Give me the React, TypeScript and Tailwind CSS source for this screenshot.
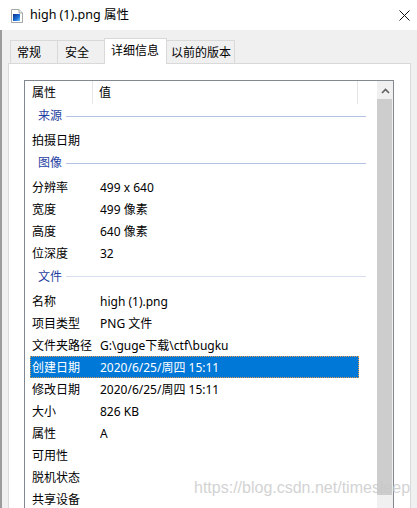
import React from "react";

type Item =
  | { kind: "group"; label: string; h: string; line: string }
  | { kind: "row"; label: string; value?: string; selected?: boolean };

const items: Item[] = [
  { kind: "group", label: "来源", h: "h-[25px]", line: "bg-[#b3c1e6]" },
  { kind: "row", label: "拍摄日期" },
  { kind: "group", label: "图像", h: "h-[25px]", line: "bg-[#b3c1e6]" },
  { kind: "row", label: "分辨率", value: "499 x 640" },
  { kind: "row", label: "宽度", value: "499 像素" },
  { kind: "row", label: "高度", value: "640 像素" },
  { kind: "row", label: "位深度", value: "32" },
  { kind: "group", label: "文件", h: "h-[26px]", line: "bg-[#d6dff1]" },
  { kind: "row", label: "名称", value: "high (1).png" },
  { kind: "row", label: "项目类型", value: "PNG 文件" },
  { kind: "row", label: "文件夹路径", value: "G:\\guge下载\\ctf\\bugku" },
  { kind: "row", label: "创建日期", value: "2020/6/25/周四 15:11", selected: true },
  { kind: "row", label: "修改日期", value: "2020/6/25/周四 15:11" },
  { kind: "row", label: "大小", value: "826 KB" },
  { kind: "row", label: "属性", value: "A" },
  { kind: "row", label: "可用性" },
  { kind: "row", label: "脱机状态" },
  { kind: "row", label: "共享设备" },
];

function FileIcon() {
  return (
    <svg width="12" height="14" viewBox="0 0 12 14">
      <path d="M0.5 0.5 H8 L11.5 4 V13.5 H0.5 Z" fill="#ffffff" stroke="#a8a8a8" />
      <path d="M8 0.5 V4 H11.5" fill="#e8e8e8" stroke="#a8a8a8" />
      <defs>
        <linearGradient id="g1" x1="0" y1="0" x2="1" y2="1">
          <stop offset="0" stopColor="#0b2f8a" />
          <stop offset="0.6" stopColor="#1e6fd6" />
          <stop offset="1" stopColor="#7cc4f4" />
        </linearGradient>
      </defs>
      <rect x="2" y="5" width="7" height="7" fill="url(#g1)" />
    </svg>
  );
}

export default function App() {
  return (
    <div className="relative w-[417px] h-[508px] overflow-hidden bg-[#f0f0f0] text-[12px] leading-none text-black font-['Noto_Sans','Noto_Sans_CJK_SC',sans-serif]">
      {/* title bar */}
      <div className="h-[30px] bg-white flex items-center">
        <div className="ml-[11px] mt-[1px] flex">
          <FileIcon />
        </div>
        <span className="ml-[7px] text-[12.5px]">high (1).png 属性</span>
        <div className="ml-auto mr-[7px] flex">
          <svg width="11" height="11" viewBox="0 0 11 11">
            <path d="M0.5 0.5 L10.5 10.5 M10.5 0.5 L0.5 10.5" stroke="#111" strokeWidth="1" />
          </svg>
        </div>
      </div>

      {/* body */}
      <div className="border-l-2 border-[#9c9c9c] h-[478px]">
        {/* tabs */}
        <div className="flex items-end pl-[8px] pt-[8px] h-[33px]">
          <div className="w-[47px] h-[23px] border-l border-t border-[#d9d9d9] flex items-center pl-[6px] pt-[2px]">常规</div>
          <div className="w-[47px] h-[23px] border-l border-t border-[#d9d9d9] flex items-center pl-[7px] pt-[2px]">安全</div>
          <div className="relative z-10 w-[63px] h-[26px] -mb-px bg-white border-l border-t border-r border-[#d9d9d9] flex items-center pl-[6px] pb-[1px]">详细信息</div>
          <div className="w-[68px] h-[23px] border-t border-r border-[#d9d9d9] flex items-center pl-[4px] pt-[2px]">以前的版本</div>
        </div>

        {/* panel */}
        <div className="ml-[6px] w-[403px] h-[460px] bg-white border border-[#d9d9d9] pl-[15px] pt-[16px]">
          {/* list box */}
          <div className="w-[370px] h-[440px] border border-[#828790] flex">
            <div className="w-[352px]">
              {/* header */}
              <div className="h-[23px] flex">
                <div className="w-[68px] border-r border-[#e5e5e5] flex items-center pl-[7px] pt-[1px]">属性</div>
                <div className="w-[265px] border-r border-[#e5e5e5] flex items-center pl-[6px] pt-[1px]">值</div>
              </div>
              {items.map((it, i) =>
                it.kind === "group" ? (
                  <div key={i} className={`${it.h} w-[341px] flex items-center pl-[13px] pb-[1px]`}>
                    <span className="text-[#1f3fa3]">{it.label}</span>
                    <div className={`ml-[4px] flex-1 h-px ${it.line}`} />
                  </div>
                ) : (
                  <div
                    key={i}
                    className={
                      it.selected
                        ? "ml-[5px] w-[329px] h-[22px] flex items-center pt-[1px] bg-[#0078d7] text-white border border-dotted border-[#e09a4a]"
                        : "ml-[5px] w-[329px] h-[22px] flex items-center pt-[1px] border border-transparent"
                    }
                  >
                    <div className="w-[69px] pl-[1px] whitespace-nowrap">{it.label}</div>
                    <div className="whitespace-nowrap">{it.value ?? ""}</div>
                  </div>
                )
              )}
            </div>
            {/* scrollbar */}
            <div className="w-[16px] flex flex-col bg-[#f0f0f0] pt-[1px]">
              <div className="h-[17px] flex items-center justify-center">
                <svg width="9" height="6" viewBox="0 0 9 6">
                  <path d="M1 5 L4.5 1.5 L8 5" fill="none" stroke="#606060" strokeWidth="1.6" />
                </svg>
              </div>
              <div className="w-[15px] h-[396px] bg-[#cdcdcd]" />
            </div>
          </div>
        </div>
      </div>

      {/* watermark */}
      <div className="absolute left-[194px] top-[480px] text-[16px] leading-none text-[#c9c9c9] opacity-80 font-['Liberation_Sans',sans-serif]">
        https://blog.csdn.net/timesleep
      </div>
    </div>
  );
}
